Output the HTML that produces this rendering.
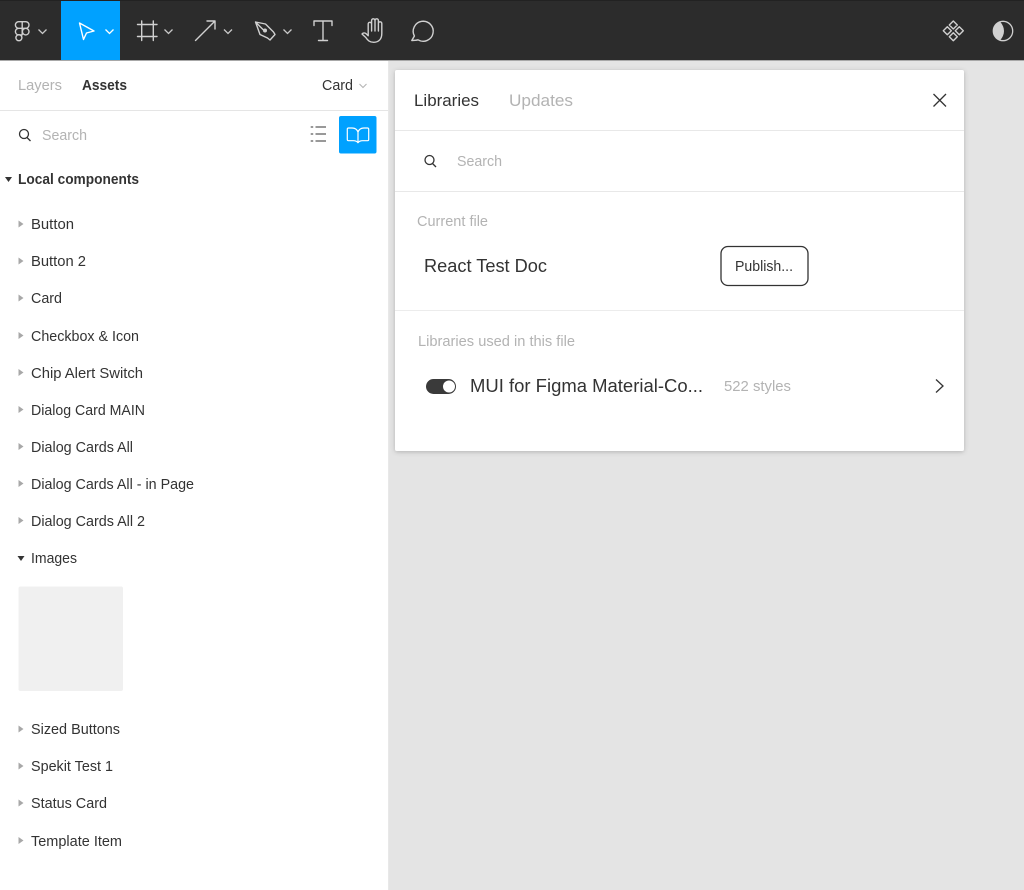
<!DOCTYPE html>
<html lang="en">
<head>
<meta charset="utf-8">
<title>Figma Libraries</title>
<style>
html,body{margin:0;padding:0;width:1024px;height:890px;overflow:hidden;background:#e4e4e4}
svg{display:block;filter:blur(.3px)}
text{font-family:"Liberation Sans",sans-serif;font-size:14.6px;fill:#333}
.g{fill:#b3b3b3}
.b{font-weight:bold}
.i{fill:none;stroke:#d0d0d0;stroke-width:1.400;stroke-linejoin:round;stroke-linecap:round}
.c{fill:none;stroke:#c8c8c8;stroke-width:1.300}
.d{fill:none;stroke:#333;stroke-width:1.300}
</style>
</head>
<body>
<svg width="1024" height="890" viewBox="0 0 1024 890" xmlns="http://www.w3.org/2000/svg">
<defs>
<filter id="s" x="-5%" y="-5%" width="110%" height="112%"><feDropShadow dx="0" dy="1" stdDeviation="2.5" flood-color="#000" flood-opacity=".22"/></filter>
</defs>
<rect width="1024" height="890" fill="#e4e4e4"/>

<!-- top bar -->
<rect width="1024" height="60" fill="#2c2c2c"/>
<rect width="1024" height="1" fill="#222"/>
<rect y="60" width="1024" height="1" fill="#a8a8a8"/>
<rect x="61" y="1" width="59" height="59" fill="#00a1ff"/>

<!-- figma logo -->
<g class="i">
<path d="M18.700 21.700h7a3.300 3.300 0 0 1 0 6.600h-7a3.300 3.300 0 0 1 0-6.600zM22.200 21.700v13.200M22.200 28.300h-3.500a3.300 3.300 0 0 0 0 6.600h3.500"/>
<circle cx="25.700" cy="31.600" r="3.300"/>
<circle cx="18.900" cy="37.700" r="3"/>
</g>
<path class="c" d="M38.500 29.500l4 4 4-4"/>

<!-- move -->
<path d="M79.500 23l14.500 8-7.500 2-3 6.500z" fill="none" stroke="#fff" stroke-width="1.400" stroke-linejoin="round"/>
<path d="M105.500 29.500l4 4 4-4" fill="none" stroke="#fff" stroke-width="1.300"/>

<!-- frame -->
<path class="i" d="M137.500 24.500h19.500M137.500 36.500h19.500M141.700 21v19.500M153.300 21v19.500" stroke-linecap="butt"/>
<path class="c" d="M164.500 29.500l4 4 4-4"/>

<!-- arrow -->
<path class="i" d="M195.500 40.500l19.500-19.500M207 21h8v8"/>
<path class="c" d="M224 29.500l4 4 4-4"/>

<!-- pen -->
<path class="i" d="M255.500 22l10 2 8 8 1.500 2.500-5 5.500-2.500-2-7.500-3.500zM255.500 22l8 8"/>
<circle cx="265" cy="30.500" r="2" fill="#d0d0d0"/>
<path class="c" d="M283.500 29.500l4 4 4-4"/>

<!-- text -->
<path class="i" d="M314 25.500v-4.500h18v4.500M323 21v19.500M318.500 40.500h9"/>

<!-- hand -->
<path class="i" d="M362 34c1-1.500 3-1.300 4.200-.2l2 2V24a1.700 1.700 0 0 1 3.400 0v-3.500a1.700 1.700 0 0 1 3.400 0v0a1.700 1.700 0 0 1 3.400 0v3a1.700 1.700 0 0 1 3.400 0v10c0 5.500-3 8.800-8 8.800-4 0-6-1.800-8-4.800zM371.600 24v7M375 20.500v10.500M378.400 23.500v7.500"/>

<!-- comment -->
<path class="i" d="M411.800 40.500l2.600-4.500a10 10 0 1 1 3.600 3.800c-2 .6-4 .7-6.200.7z"/>

<!-- component set -->
<path class="i" stroke-width="1.200" d="M953.300 21l4 4-4 4-4-4zM947.300 26.800l4 4-4 4-4-4zM959.300 26.800l4 4-4 4-4-4zM953.300 32.700l4 4-4 4-4-4z"/>

<!-- contrast -->
<circle cx="1003" cy="31" r="9.700" fill="none" stroke="#cfcfcf" stroke-width="1.300"/>
<path d="M1000 21.500A10 10 0 0 0 1000 40.500Q1008 31 1000 21.500z" fill="#d0d0d0"/>

<!-- left panel -->
<rect x="0" y="61" width="388" height="829" fill="#fff"/>
<rect x="388" y="61" width="1" height="829" fill="#e8e8e8"/>
<rect x="0" y="110" width="388" height="1" fill="#e5e5e5"/>

<text class="g" x="18" y="90" textLength="44" lengthAdjust="spacingAndGlyphs">Layers</text>
<text class="b" x="82" y="90" textLength="45" lengthAdjust="spacingAndGlyphs">Assets</text>
<text x="322" y="90" textLength="31" lengthAdjust="spacingAndGlyphs">Card</text>
<path d="M359.500 84l3.500 3.500 3.500-3.500" fill="none" stroke="#b3b3b3" stroke-width="1"/>

<!-- panel search -->
<circle cx="24" cy="134" r="4.500" class="d"/>
<path class="d" d="M27 137.500l3.500 3.500"/>
<text class="g" x="42" y="140" textLength="45" lengthAdjust="spacingAndGlyphs">Search</text>

<!-- list icon -->
<path d="M310.700 127h2.500M315.500 127h10.500M310.700 134h2.500M315.500 134h10.500M310.700 141h2.500M315.500 141h10.500" fill="none" stroke="#333" stroke-width="1.100"/>

<!-- library button -->
<rect x="339" y="116" width="37.500" height="37.500" rx="2" fill="#00a1ff"/>
<path d="M358 132c-1-2.700-3.200-4-6-4h-3.500c-.7 0-1.200.5-1.200 1.200v10.300c0 .7.500 1.200 1.200 1.200h5c1.800 0 3.300.5 4.500 2 1.200-1.500 2.700-2 4.500-2h5c.7 0 1.200-.5 1.200-1.200v-10.300c0-.7-.5-1.200-1.200-1.200H364c-2.800 0-5 1.300-6 4zM358 132v10" fill="none" stroke="#fff" stroke-width="1.200" stroke-linejoin="round"/>

<!-- tree -->
<path d="M5 177h7l-3.500 5z" fill="#333"/>
<text class="b" x="18" y="184" textLength="121" lengthAdjust="spacingAndGlyphs">Local components</text>

<g fill="#a8a8a8">
<path d="M18.500 220.500l5 3.500-5 3.500z"/>
<path d="M18.500 257.500l5 3.500-5 3.500z"/>
<path d="M18.500 294.500l5 3.500-5 3.500z"/>
<path d="M18.500 332l5 3.500-5 3.500z"/>
<path d="M18.500 369l5 3.500-5 3.500z"/>
<path d="M18.500 406l5 3.500-5 3.500z"/>
<path d="M18.500 443l5 3.500-5 3.500z"/>
<path d="M18.500 480l5 3.500-5 3.500z"/>
<path d="M18.500 517l5 3.500-5 3.500z"/>
<path d="M18.500 725.500l5 3.500-5 3.500z"/>
<path d="M18.500 762.500l5 3.500-5 3.500z"/>
<path d="M18.500 799.500l5 3.500-5 3.500z"/>
<path d="M18.500 837l5 3.500-5 3.500z"/>
</g>
<path d="M17.500 556h7l-3.500 5z" fill="#333"/>

<text x="31" y="229" textLength="43" lengthAdjust="spacingAndGlyphs">Button</text>
<text x="31" y="266" textLength="55" lengthAdjust="spacingAndGlyphs">Button 2</text>
<text x="31" y="303" textLength="31" lengthAdjust="spacingAndGlyphs">Card</text>
<text x="31" y="341" textLength="108" lengthAdjust="spacingAndGlyphs">Checkbox &amp; Icon</text>
<text x="31" y="378" textLength="112" lengthAdjust="spacingAndGlyphs">Chip Alert Switch</text>
<text x="31" y="415" textLength="114" lengthAdjust="spacingAndGlyphs">Dialog Card MAIN</text>
<text x="31" y="452" textLength="102" lengthAdjust="spacingAndGlyphs">Dialog Cards All</text>
<text x="31" y="489" textLength="163" lengthAdjust="spacingAndGlyphs">Dialog Cards All - in Page</text>
<text x="31" y="526" textLength="114" lengthAdjust="spacingAndGlyphs">Dialog Cards All 2</text>
<text x="31" y="563" textLength="46" lengthAdjust="spacingAndGlyphs">Images</text>

<rect x="18.500" y="586.500" width="104.500" height="104.500" rx="2" fill="#f0f0f0"/>

<text x="31" y="734" textLength="89" lengthAdjust="spacingAndGlyphs">Sized Buttons</text>
<text x="31" y="771" textLength="82" lengthAdjust="spacingAndGlyphs">Spekit Test 1</text>
<text x="31" y="808" textLength="76" lengthAdjust="spacingAndGlyphs">Status Card</text>
<text x="31" y="846" textLength="91" lengthAdjust="spacingAndGlyphs">Template Item</text>

<!-- dialog -->
<rect x="395" y="70" width="569" height="381" rx="2" fill="#fff" filter="url(#s)"/>
<rect x="395" y="130" width="569" height="1" fill="#e8e8e8"/>
<rect x="395" y="191" width="569" height="1" fill="#e8e8e8"/>
<rect x="395" y="310" width="569" height="1" fill="#ececec"/>

<text x="414" y="106" style="font-size:17px" textLength="65" lengthAdjust="spacingAndGlyphs">Libraries</text>
<text class="g" x="509" y="106" style="font-size:17px" textLength="64" lengthAdjust="spacingAndGlyphs">Updates</text>
<path d="M933.500 94l12.500 12.500M946 94l-12.500 12.500" fill="none" stroke="#333" stroke-width="1.300"/>

<circle cx="429.500" cy="160" r="4.500" class="d"/>
<path class="d" d="M432.500 163.500l3.500 3.500"/>
<text class="g" x="457" y="166" textLength="45" lengthAdjust="spacingAndGlyphs">Search</text>

<text class="g" x="417" y="226" textLength="71" lengthAdjust="spacingAndGlyphs">Current file</text>
<text x="424" y="272" style="font-size:18px" textLength="123" lengthAdjust="spacingAndGlyphs">React Test Doc</text>

<rect x="721" y="246.500" width="87" height="39" rx="7" fill="#fff" stroke="#333" stroke-width="1.300"/>
<text x="735" y="271" textLength="58" lengthAdjust="spacingAndGlyphs">Publish...</text>

<text class="g" x="418" y="346" textLength="157" lengthAdjust="spacingAndGlyphs">Libraries used in this file</text>

<rect x="426" y="379" width="30" height="15" rx="7.500" fill="#3a3a3a"/>
<circle cx="449" cy="386.500" r="6" fill="#fff"/>
<text x="470" y="392" style="font-size:18px" textLength="233" lengthAdjust="spacingAndGlyphs">MUI for Figma Material-Co...</text>
<text class="g" x="724" y="391" textLength="67" lengthAdjust="spacingAndGlyphs">522 styles</text>
<path d="M936 379.500l7 6.500-7 6.500" fill="none" stroke="#333" stroke-width="1.300"/>
</svg>
</body>
</html>
